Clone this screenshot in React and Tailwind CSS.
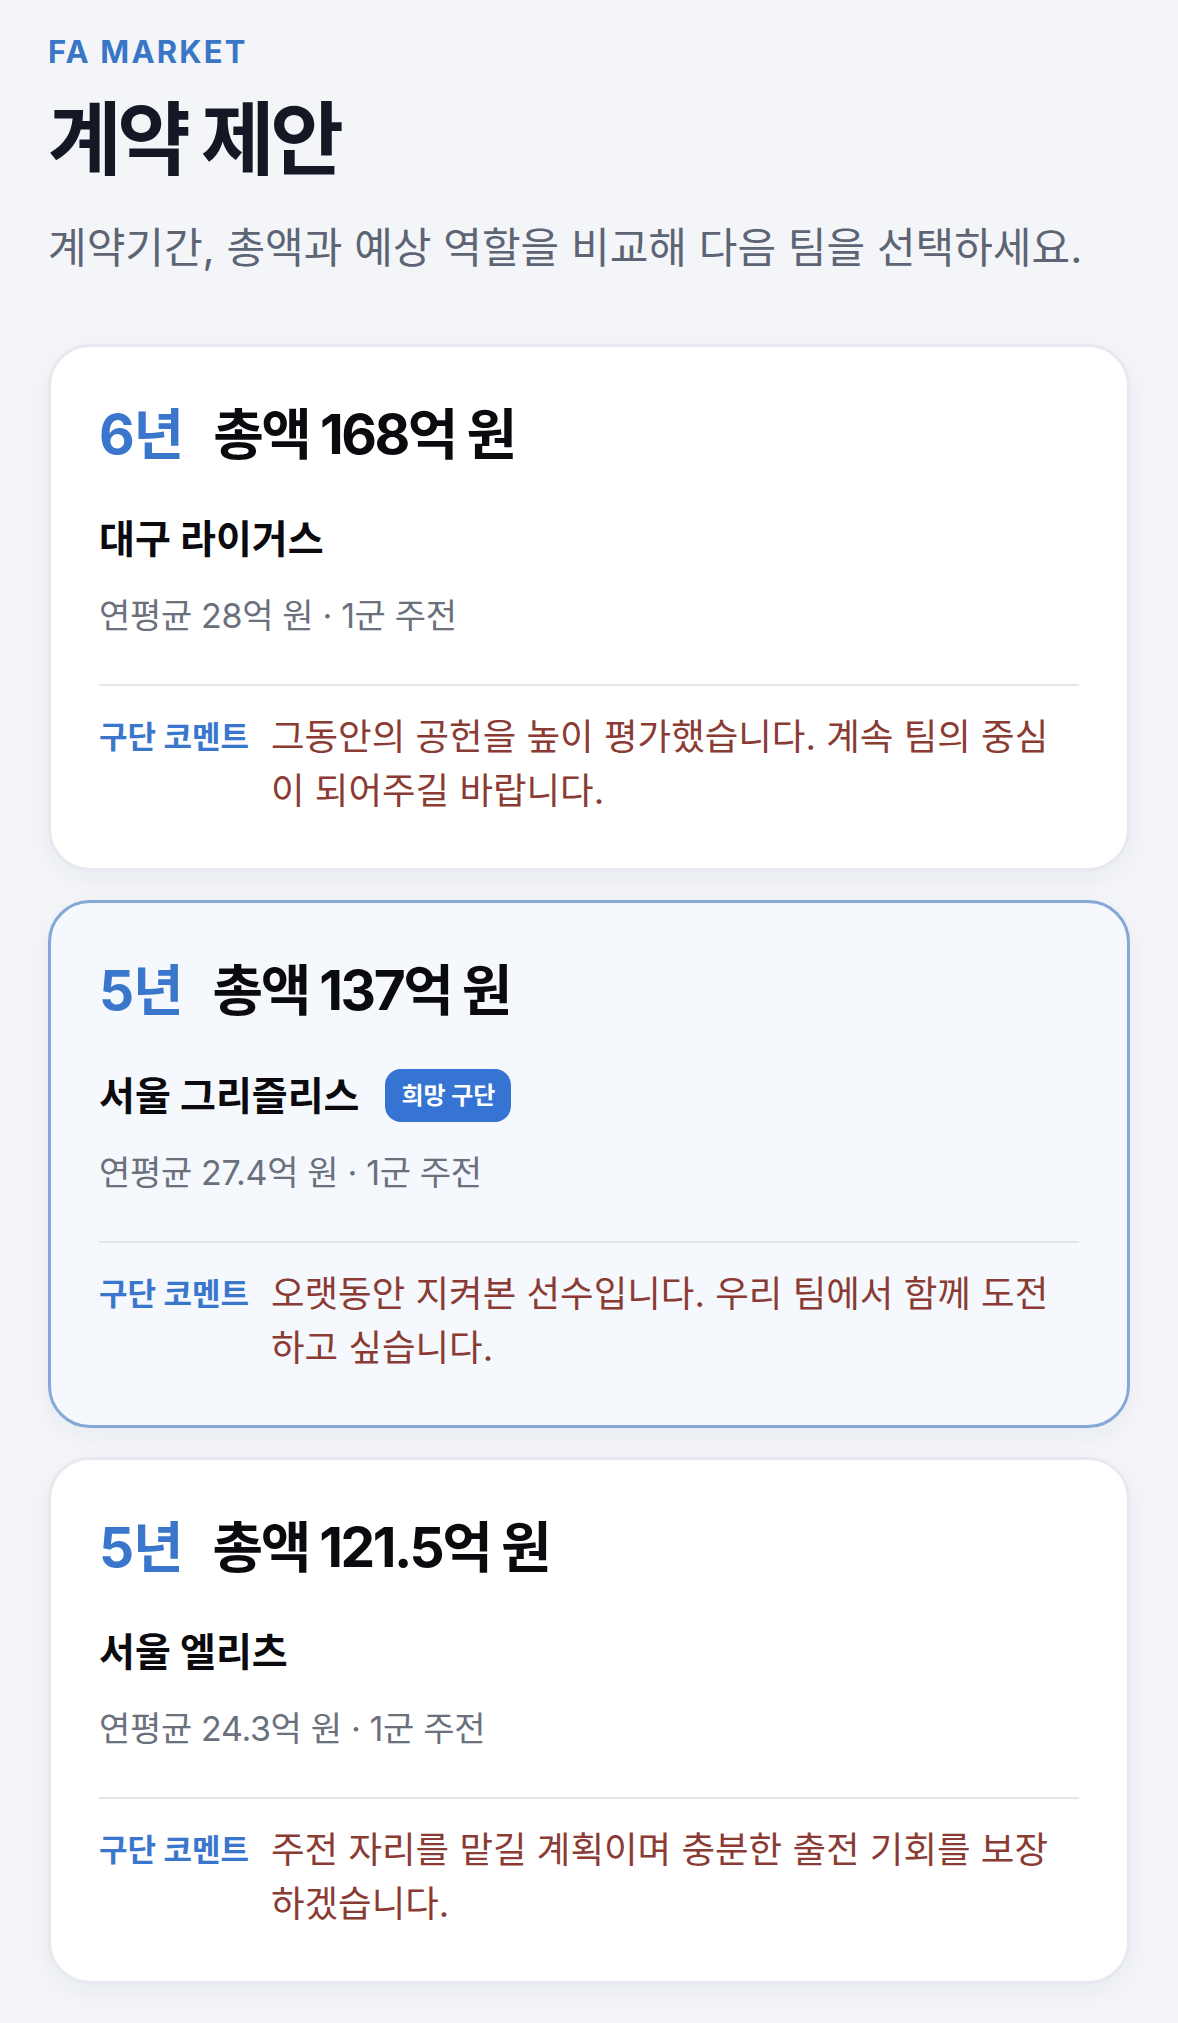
const offers = [
  {
    years: '6년',
    total: '총액 168억 원',
    team: '대구 라이거스',
    meta: '연평균 28억 원 · 1군 주전',
    comment: '그동안의 공헌을 높이 평가했습니다. 계속 팀의 중심이 되어주길 바랍니다.',
    preferred: false,
  },
  {
    years: '5년',
    total: '총액 137억 원',
    team: '서울 그리즐리스',
    meta: '연평균 27.4억 원 · 1군 주전',
    comment: '오랫동안 지켜본 선수입니다. 우리 팀에서 함께 도전하고 싶습니다.',
    preferred: true,
  },
  {
    years: '5년',
    total: '총액 121.5억 원',
    team: '서울 엘리츠',
    meta: '연평균 24.3억 원 · 1군 주전',
    comment: '주전 자리를 맡길 계획이며 충분한 출전 기회를 보장하겠습니다.',
    preferred: false,
  },
]

function OfferCard({ offer }) {
  const cardTone = offer.preferred
    ? 'bg-[#f5f8fd] border-[#86a8d6]'
    : 'bg-white border-[#e7e9ee]'

  return (
    <div
      className={`rounded-[42px] border-[3px] px-12 pt-12 pb-[50px] shadow-[0_8px_24px_rgba(20,30,60,0.05)] ${cardTone}`}
    >
      <div className="flex items-center gap-[30px] h-[78px]">
        <span className="text-[55px] leading-[78px] font-bold tracking-[-0.02em] text-[#3a77cc]">
          {offer.years}
        </span>
        <span className="text-[55px] leading-[78px] font-bold tracking-[-0.045em] text-[#0b0b0f]">
          {offer.total}
        </span>
      </div>

      <div className="mt-[42px] flex items-center min-h-[48px]">
        <span className="text-[39px] leading-[48px] font-bold text-[#0b0b0f]">
          {offer.team}
        </span>
        {offer.preferred && (
          <span className="ml-[26px] -my-[2px] h-[53px] px-[16px] rounded-[16px] bg-[#3574d3] text-white text-[24px] font-bold flex items-center">
            희망 구단
          </span>
        )}
      </div>

      <div className="mt-[31px] text-[34px] leading-[44px] tracking-[-0.01em] text-[#6a707c]">
        {offer.meta}
      </div>

      <div className="mt-[46px] h-[2px] bg-[#e4e6ea]" />

      <div className="mt-[24px] flex items-start gap-[22px]">
        <span className="shrink-0 text-[31px] leading-[54px] font-bold text-[#3a77cc]">
          구단 코멘트
        </span>
        <p className="max-w-[794px] text-[36.5px] leading-[54px] text-[#8a3b33]">
          {offer.comment}
        </p>
      </div>
    </div>
  )
}

export default function App() {
  return (
    <div
      className="min-h-[2023px] bg-[#f3f5f9] px-12 pt-[34px] pb-10"
      style={{ fontFamily: "Inter, 'Noto Sans CJK KR', sans-serif" }}
    >
      <div className="text-[31px] leading-[36px] font-bold tracking-[0.07em] text-[#3a76c6]">
        FA MARKET
      </div>
      <h1 className="mt-[25px] text-[80px] leading-[88px] font-bold tracking-[-0.055em] text-[#141824]">
        계약 제안
      </h1>
      <p className="mt-[39px] text-[42px] leading-[52px] text-[#5d6473]">
        계약기간, 총액과 예상 역할을 비교해 다음 팀을 선택하세요.
      </p>

      <div className="mt-[70px] flex flex-col gap-[29px]">
        {offers.map((offer) => (
          <OfferCard key={offer.team} offer={offer} />
        ))}
      </div>
    </div>
  )
}
